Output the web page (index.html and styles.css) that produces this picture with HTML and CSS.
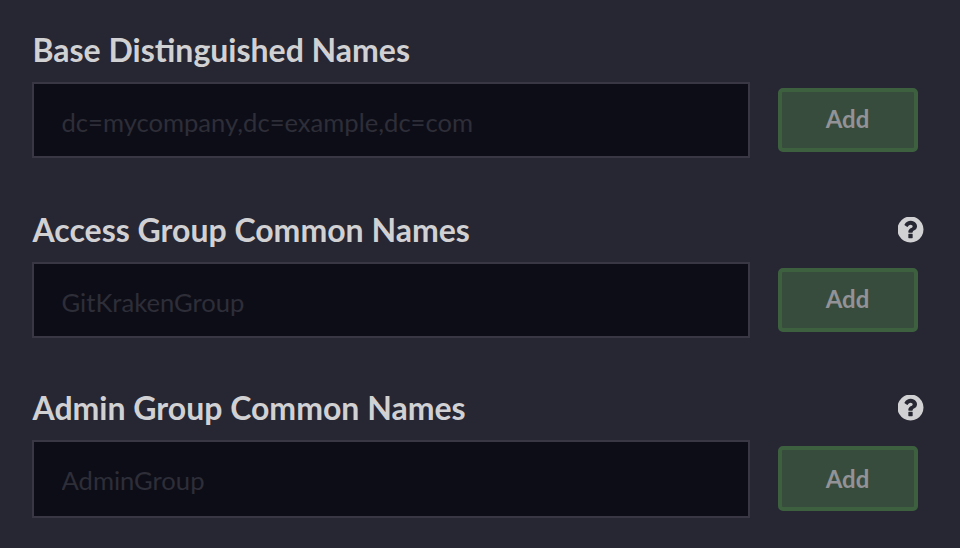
FILE: index.html
```html
<!DOCTYPE html>
<html lang="en">
<head>
<meta charset="utf-8">
<title>LDAP Settings</title>
<link rel="stylesheet" href="styles.css">
</head>
<body>
<form class="settings">
  <section class="field">
    <div class="heading"><label for="base">Base Distinguished Names</label></div>
    <div class="row"><input id="base" type="text" placeholder="dc=mycompany,dc=example,dc=com"><button class="add" type="button">Add</button></div>
  </section>
  <section class="field">
    <div class="heading"><label for="access">Access Group Common Names</label>
      <svg class="help" viewBox="128 128 1536 1536"><path d="M1024 1376v-192q0-14-9-23t-23-9h-192q-14 0-23 9t-9 23v192q0 14 9 23t23 9h192q14 0 23-9t9-23zM1280 704q0-88-55.500-163t-138.500-116-170-41q-243 0-371 213-15 24 8 42l132 100q7 6 19 6 16 0 25-12 53-68 86-92 34-24 86-24 48 0 85.500 26t37.500 59q0 38-20 61t-68 45q-63 28-115.500 86.500t-52.500 125.500v36q0 14 9 23t23 9h192q14 0 23-9t9-23q0-19 21.500-49.500t54.500-49.500q32-18 49-28.500t46-35 44.500-48 28-60.500 12.500-81zM1664 896q0 209-103 385.500t-279.500 279.500-385.500 103-385.500-103-279.500-279.500-103-385.500 103-385.500 279.500-279.500 385.500-103 385.500 103 279.500 279.500 103 385.500z"/></svg>
    </div>
    <div class="row"><input id="access" type="text" placeholder="GitKrakenGroup"><button class="add" type="button">Add</button></div>
  </section>
  <section class="field field-last">
    <div class="heading"><label for="admin">Admin Group Common Names</label>
      <svg class="help" viewBox="128 128 1536 1536"><path d="M1024 1376v-192q0-14-9-23t-23-9h-192q-14 0-23 9t-9 23v192q0 14 9 23t23 9h192q14 0 23-9t9-23zM1280 704q0-88-55.500-163t-138.500-116-170-41q-243 0-371 213-15 24 8 42l132 100q7 6 19 6 16 0 25-12 53-68 86-92 34-24 86-24 48 0 85.500 26t37.500 59q0 38-20 61t-68 45q-63 28-115.500 86.500t-52.500 125.500v36q0 14 9 23t23 9h192q14 0 23-9t9-23q0-19 21.500-49.500t54.500-49.500q32-18 49-28.500t46-35 44.500-48 28-60.500 12.500-81zM1664 896q0 209-103 385.500t-279.500 279.500-385.500 103-385.500-103-279.500-279.500-103-385.500 103-385.500 279.500-279.500 385.500-103 385.500 103 279.500 279.500 103 385.500z"/></svg>
    </div>
    <div class="row"><input id="admin" type="text" placeholder="AdminGroup"><button class="add" type="button">Add</button></div>
  </section>
</form>
</body>
</html>
```
FILE: styles.css
```css
* { box-sizing: border-box; }
body {
  margin: 0;
  height: 548px;
  overflow: hidden;
  background: #272733;
  color: #d1d1d3;
  font-family: Lato, sans-serif;
}
.settings { padding: 30px 36px 0 32px; }
.field { height: 180px; }
.field:nth-child(2) { height: 178px; }
.heading {
  display: flex;
  justify-content: space-between;
  height: 52px;
  padding-left: 0.5px;
  line-height: 40px;
  font-size: 32px;
  font-weight: 700;
}
.help { width: 27px; height: 27px; padding: 0.5px; margin-top: 6px; fill: #d1d1d3; }
.row { display: flex; gap: 28px; }
input {
  width: 718px;
  height: 76px;
  padding: 4px 27.5px 0;
  border: 2px solid #383743;
  border-radius: 0;
  background: #0d0d17;
  color: #d1d1d3;
  font: 400 25.6px Lato, sans-serif;
}
input::placeholder { color: #2e2e38; opacity: 1; }
.field-last input { height: 78px; padding-top: 2px; }
.add {
  width: 140px;
  height: 64px;
  margin-top: 6px;
  padding: 0 1px 4px 0;
  border: 4px solid #3d613f;
  border-radius: 5px;
  background: #374c3c;
  color: #929297;
  font: 700 24px Lato, sans-serif;
}
.field-last .add { height: 65px; padding-bottom: 0; }
```
